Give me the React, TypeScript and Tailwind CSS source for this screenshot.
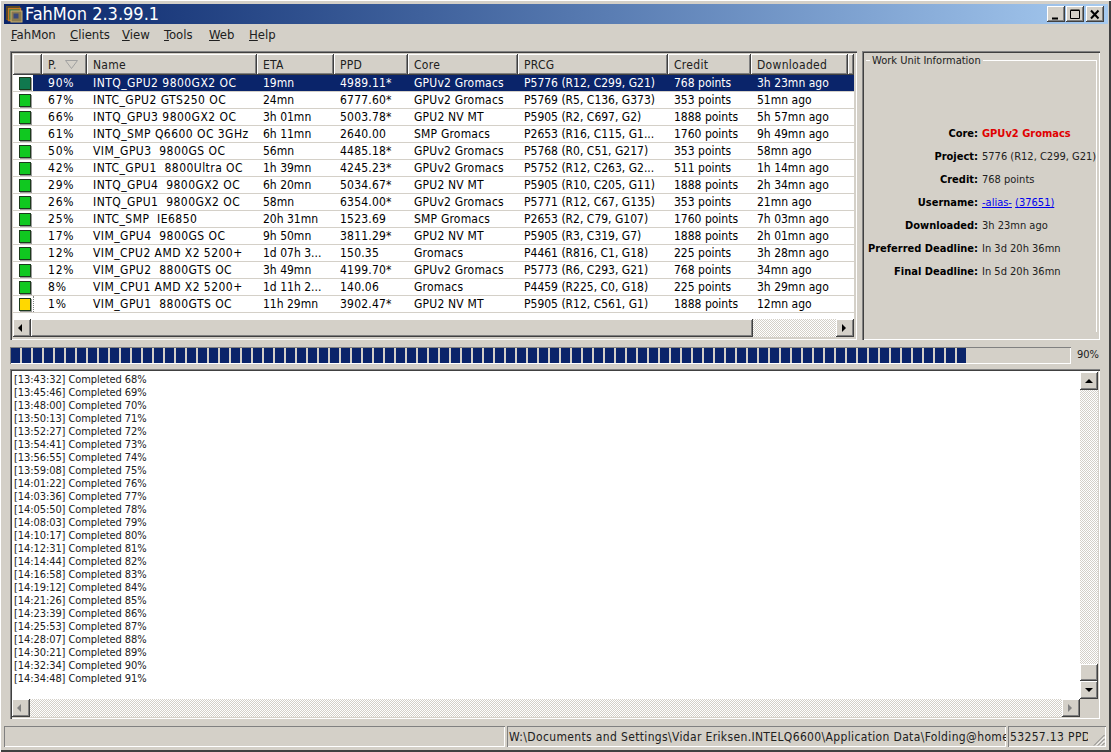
import { Fragment } from 'react'

const FONT = "font-['DejaVu_Sans_Condensed','DejaVu_Sans',sans-serif]"
const SUNKEN = 'shadow-[inset_1px_1px_0_#808080,inset_2px_2px_0_#404040,inset_-1px_-1px_0_#ffffff,inset_-2px_-2px_0_#d4d0c8]'
const RAISED = 'shadow-[inset_-1px_-1px_0_#404040,inset_1px_1px_0_#ffffff,inset_-2px_-2px_0_#808080]'
const DITHER = 'bg-[repeating-conic-gradient(#ffffff_0_25%,#d4d0c8_0_50%)] bg-[length:2px_2px]'

const COLUMNS = [
  { label: 'Name', width: 'w-[170px]', track: 'tracking-[0.45px]' },
  { label: 'ETA', width: 'w-[77px]', track: '' },
  { label: 'PPD', width: 'w-[74px]', track: 'tracking-[0.2px]' },
  { label: 'Core', width: 'w-[110px]', track: 'tracking-[0.2px]' },
  { label: 'PRCG', width: 'w-[150px]', track: '' },
  { label: 'Credit', width: 'w-[83px]', track: '' },
  { label: 'Downloaded', width: 'w-[97px]', track: '' },
]

const ROWS = [
  ['90%', 'INTQ_GPU2 9800GX2 OC', '19mn', '4989.11*', 'GPUv2 Gromacs', 'P5776 (R12, C299, G21)', '768 points', '3h 23mn ago'],
  ['67%', 'INTC_GPU2 GTS250 OC', '24mn', '6777.60*', 'GPUv2 Gromacs', 'P5769 (R5, C136, G373)', '353 points', '51mn ago'],
  ['66%', 'INTQ_GPU3 9800GX2 OC', '3h 01mn', '5003.78*', 'GPU2 NV MT', 'P5905 (R2, C697, G2)', '1888 points', '5h 57mn ago'],
  ['61%', 'INTQ_SMP Q6600 OC 3GHz', '6h 11mn', '2640.00', 'SMP Gromacs', 'P2653 (R16, C115, G1...', '1760 points', '9h 49mn ago'],
  ['50%', 'VIM_GPU3  9800GS OC', '56mn', '4485.18*', 'GPUv2 Gromacs', 'P5768 (R0, C51, G217)', '353 points', '58mn ago'],
  ['42%', 'INTC_GPU1  8800Ultra OC', '1h 39mn', '4245.23*', 'GPUv2 Gromacs', 'P5752 (R12, C263, G2...', '511 points', '1h 14mn ago'],
  ['29%', 'INTQ_GPU4  9800GX2 OC', '6h 20mn', '5034.67*', 'GPU2 NV MT', 'P5905 (R10, C205, G11)', '1888 points', '2h 34mn ago'],
  ['26%', 'INTQ_GPU1  9800GX2 OC', '58mn', '6354.00*', 'GPUv2 Gromacs', 'P5771 (R12, C67, G135)', '353 points', '21mn ago'],
  ['25%', 'INTC_SMP  IE6850', '20h 31mn', '1523.69', 'SMP Gromacs', 'P2653 (R2, C79, G107)', '1760 points', '7h 03mn ago'],
  ['17%', 'VIM_GPU4  9800GS OC', '9h 50mn', '3811.29*', 'GPU2 NV MT', 'P5905 (R3, C319, G7)', '1888 points', '2h 01mn ago'],
  ['12%', 'VIM_CPU2 AMD X2 5200+', '1d 07h 3...', '150.35', 'Gromacs', 'P4461 (R816, C1, G18)', '225 points', '3h 28mn ago'],
  ['12%', 'VIM_GPU2  8800GTS OC', '3h 49mn', '4199.70*', 'GPUv2 Gromacs', 'P5773 (R6, C293, G21)', '768 points', '34mn ago'],
  ['8%', 'VIM_CPU1 AMD X2 5200+', '1d 11h 2...', '140.06', 'Gromacs', 'P4459 (R225, C0, G18)', '225 points', '3h 29mn ago'],
  ['1%', 'VIM_GPU1  8800GTS OC', '11h 29mn', '3902.47*', 'GPU2 NV MT', 'P5905 (R12, C561, G1)', '1888 points', '12mn ago'],
]

const LOG = [
  ['13:43:32', 68], ['13:45:46', 69], ['13:48:00', 70], ['13:50:13', 71], ['13:52:27', 72], ['13:54:41', 73],
  ['13:56:55', 74], ['13:59:08', 75], ['14:01:22', 76], ['14:03:36', 77], ['14:05:50', 78], ['14:08:03', 79],
  ['14:10:17', 80], ['14:12:31', 81], ['14:14:44', 82], ['14:16:58', 83], ['14:19:12', 84], ['14:21:26', 85],
  ['14:23:39', 86], ['14:25:53', 87], ['14:28:07', 88], ['14:30:21', 89], ['14:32:34', 90], ['14:34:48', 91],
]

const INFO = [
  ['Core:', 'GPUv2 Gromacs'],
  ['Project:', '5776 (R12, C299, G21)'],
  ['Credit:', '768 points'],
  ['Username:', ''],
  ['Downloaded:', '3h 23mn ago'],
  ['Preferred Deadline:', 'In 3d 20h 36mn'],
  ['Final Deadline:', 'In 5d 20h 36mn'],
]

const MENU = [
  ['F', 'ahMon', 'w-[59px]'],
  ['C', 'lients', 'w-[52px]'],
  ['V', 'iew', 'w-[42px]'],
  ['T', 'ools', 'w-[45px]'],
  ['W', 'eb', 'w-[40px]'],
  ['H', 'elp', 'w-[40px]'],
]

function AppIcon() {
  return (
    <svg width="17" height="17" viewBox="0 0 17 17" className="mr-[2px] shrink-0">
      <rect x="0.5" y="0.5" width="13" height="13" fill="#3a3a30" stroke="#5a4a20" />
      <rect x="2.5" y="2.5" width="12" height="12" fill="#3f7a4a" stroke="#c87820" strokeWidth="1.5" />
      <rect x="5" y="5" width="11" height="11" fill="#8a7a50" stroke="#c8b070" />
      <rect x="7.5" y="7.5" width="5" height="5" fill="#3a4a7a" />
    </svg>
  )
}

function Arrow({ dir, color = '#000000' }: { dir: 'left' | 'right' | 'up' | 'down'; color?: string }) {
  const points = {
    left: '5,1 5,9 1,5',
    right: '2,1 2,9 6,5',
    up: '1,7 9,7 5,3',
    down: '1,3 9,3 5,7',
  }[dir]
  return (
    <svg width="10" height="10" viewBox="0 0 10 10">
      <polygon points={points} fill={color} />
    </svg>
  )
}

function ScrollButton({ dir, color }: { dir: 'left' | 'right' | 'up' | 'down'; color?: string }) {
  return (
    <div className={`w-[18px] h-[18px] shrink-0 flex items-center justify-center bg-[#d4d0c8] ${RAISED}`}>
      <Arrow dir={dir} color={color} />
    </div>
  )
}

function CaptionButton({ kind }: { kind: 'min' | 'max' | 'close' }) {
  return (
    <div className={`w-[18px] h-[16px] flex items-center justify-center bg-[#d4d0c8] ${RAISED}`}>
      <svg width="12" height="11" viewBox="0 0 12 11" stroke="#000000" fill="none">
        {kind === 'min' && <path d="M2 9.5h6" strokeWidth="2" />}
        {kind === 'max' && <path d="M1.5 1.5h9v8h-9zM1.5 1h9" />}
        {kind === 'close' && <path d="M2 1.5l7.5 8M9.5 1.5l-7.5 8" strokeWidth="2" />}
      </svg>
    </div>
  )
}

function StatusSquare({ color }: { color: string }) {
  return <div className={`w-[12px] h-[13px] border border-[#1c3a1c] shadow-[1px_1px_0_#9a9a9a] ${color}`} />
}

function ListRow({ row, index }: { row: string[]; index: number }) {
  const selected = index === 0
  const last = index === ROWS.length - 1
  const square = selected ? 'bg-[#10784e]' : last ? 'bg-[#ffd800]' : 'bg-[#10c820]'
  return (
    <div className="flex h-[17px] border-b border-[#d4d0c8] box-border">
      <div className="w-[20px] shrink-0 flex items-center justify-center pl-[3px]">
        <StatusSquare color={square} />
      </div>
      <div
        className={`flex flex-1 items-center ${selected ? 'bg-[#0a246a] text-white' : 'text-[#000000]'} border-l border-dotted ${
          last ? 'border-[#808080]' : 'border-transparent'
        }`}
      >
        <div className="w-[53px] pl-[14px] shrink-0 whitespace-pre tracking-[0.8px]">{row[0]}</div>
        {COLUMNS.map((c, i) => (
          <div key={c.label} className={`${c.width} ${c.track} pl-[6px] shrink-0 whitespace-pre overflow-hidden`}>
            {row[i + 1]}
          </div>
        ))}
      </div>
    </div>
  )
}

function ClientList() {
  return (
    <div className={`w-[847px] h-[289px] p-[3px] flex flex-col ${SUNKEN}`}>
      <div className="flex h-[21px] shrink-0 bg-[#d4d0c8] text-[#202020] tracking-[0.3px]">
        <div className={`w-[29px] ${RAISED}`} />
        <div className={`w-[45px] pl-[6px] flex items-center gap-[8px] ${RAISED}`}>
          P.
          <svg width="13" height="9" viewBox="0 0 13 9" fill="none" stroke="#a0a0a0">
            <path d="M0.5 0.5h12l-6 8z" />
          </svg>
        </div>
        {COLUMNS.map((c) => (
          <div key={c.label} className={`${c.width} pl-[6px] flex items-center ${RAISED}`}>
            {c.label}
          </div>
        ))}
        <div className={`flex-1 ${RAISED}`} />
      </div>
      <div className="flex-1 bg-white min-h-0">
        {ROWS.map((row, i) => (
          <ListRow key={row[1] + i} row={row} index={i} />
        ))}
      </div>
      <div className="flex h-[18px] shrink-0 bg-[#d4d0c8]">
        <ScrollButton dir="left" />
        <div className={`w-[722px] ${RAISED}`} />
        <div className={`flex-1 ${DITHER}`} />
        <ScrollButton dir="right" />
      </div>
    </div>
  )
}

function WorkUnitInfo() {
  return (
    <div className={`w-[238px] h-[289px] px-[3px] pt-[2px] pb-[3px] ${SUNKEN}`}>
      <fieldset className="h-[278px] border-t border-r border-white ml-[1px] mt-[1px]">
        <legend className="ml-[4px] px-[2px] text-[11px] leading-[13px] text-[#202020]">Work Unit Information</legend>
        <div className="grid grid-cols-[112px_1fr] auto-rows-[23px] gap-x-[4px] mt-[59px] text-[11px]">
          {INFO.map(([label, value]) => (
            <Fragment key={label}>
              <div className="font-bold text-right whitespace-nowrap text-[#000000]">{label}</div>
              {label === 'Username:' ? (
                <div className="text-[#0000ee] whitespace-pre">
                  <span className="underline">-alias-</span> <span className="underline">(37651)</span>
                </div>
              ) : label === 'Core:' ? (
                <div className="font-bold text-[#e00000] whitespace-nowrap">{value}</div>
              ) : (
                <div className="whitespace-nowrap text-[#202020]">{value}</div>
              )}
            </Fragment>
          ))}
        </div>
      </fieldset>
    </div>
  )
}

function ProgressRow() {
  return (
    <div className="flex items-center h-[18px] mt-[6px] text-[11px]">
      <div className="w-[1061px] h-[17px] flex gap-[2px] pl-[1px] py-[1px] shadow-[inset_1px_1px_0_#808080,inset_-1px_-1px_0_#ffffff]">
        {Array.from({ length: 87 }, (_, i) => (
          <div key={i} className="w-[9px] h-full bg-[#0a246a]" />
        ))}
      </div>
      <div className="ml-[6px] text-[#202020]">90%</div>
    </div>
  )
}

function LogPanel() {
  return (
    <div className={`w-[1090px] h-[350px] mt-[5px] p-[2px] flex flex-col ${SUNKEN}`}>
      <div className="flex flex-1 min-h-0 bg-white">
        <div className="flex-1 pl-[2px] pt-[2px] text-[11px] leading-[13px] text-[#202020] tracking-[-0.08px]">
          {LOG.map(([time, pct]) => (
            <div key={time}>
              [{time}] Completed {pct}%
            </div>
          ))}
        </div>
        <div className="w-[18px] pt-[1px] flex flex-col">
          <ScrollButton dir="up" />
          <div className={`flex-1 ${DITHER}`} />
          <div className={`h-[17px] shrink-0 ${RAISED} bg-[#d4d0c8]`} />
          <ScrollButton dir="down" />
        </div>
      </div>
      <div className="flex h-[18px] shrink-0">
        <ScrollButton dir="left" color="#808080" />
        <div className={`flex-1 ${DITHER}`} />
        <ScrollButton dir="right" color="#808080" />
        <div className="w-[18px] bg-[#d4d0c8]" />
      </div>
    </div>
  )
}

function StatusBar() {
  const cell = 'h-full shrink-0 flex items-center overflow-hidden whitespace-nowrap shadow-[inset_1px_1px_0_#808080,inset_-1px_-1px_0_#ffffff]'
  return (
    <div className="flex h-[21px] mt-[7px] -mx-[6px] gap-[2px] text-[#202020] tracking-[0.35px]">
      <div className={`${cell} w-[501px]`} />
      <div className={`${cell} w-[499px] pl-[2px]`}>
        W:\Documents and Settings\Vidar Eriksen.INTELQ6600\Application Data\Folding@home
      </div>
      <div className={`${cell} w-[98px] pl-[2px] justify-start relative`}>
        <div className="w-[78px] overflow-hidden shrink-0">53257.13 PPD</div>
        <svg width="12" height="12" viewBox="0 0 12 12" className="absolute right-[1px] bottom-[1px]" stroke="#808080" fill="none">
          <path d="M1 11.5L11.5 1M5 11.5L11.5 5M9 11.5L11.5 9" />
          <path d="M3 11.5L11.5 3M7 11.5L11.5 7" stroke="#ffffff" />
        </svg>
      </div>
    </div>
  )
}

export default function App() {
  return (
    <div
      className={`${FONT} w-[1111px] h-[752px] overflow-hidden bg-[#d4d0c8] text-[12px] flex flex-col pt-[4px] pl-[4px] pr-[3px] shadow-[inset_1px_1px_0_#ffffff,inset_-2px_-2px_0_#404040]`}
    >
      <div className="h-[20px] shrink-0 flex items-center pl-[2px] pr-[4px] bg-gradient-to-r from-[#0a246a] to-[#a6caf0]">
        <AppIcon />
        <div className="text-[18px] leading-[20px] text-white flex-1">FahMon 2.3.99.1</div>
        <CaptionButton kind="min" />
        <div className="w-[1px]" />
        <CaptionButton kind="max" />
        <div className="w-[2px]" />
        <CaptionButton kind="close" />
      </div>

      <div className="h-[20px] shrink-0 flex items-center pl-[7px] pt-[1px] text-[13px] text-[#202020]">
        {MENU.map(([first, rest, width]) => (
          <div key={first} className={width}>
            <span className="underline">{first}</span>
            {rest}
          </div>
        ))}
      </div>

      <div className="flex flex-col pl-[6px] mt-[7px] flex-1 min-h-0">
        <div className="flex gap-[5px]">
          <ClientList />
          <WorkUnitInfo />
        </div>
        <ProgressRow />
        <LogPanel />
        <StatusBar />
      </div>
    </div>
  )
}
